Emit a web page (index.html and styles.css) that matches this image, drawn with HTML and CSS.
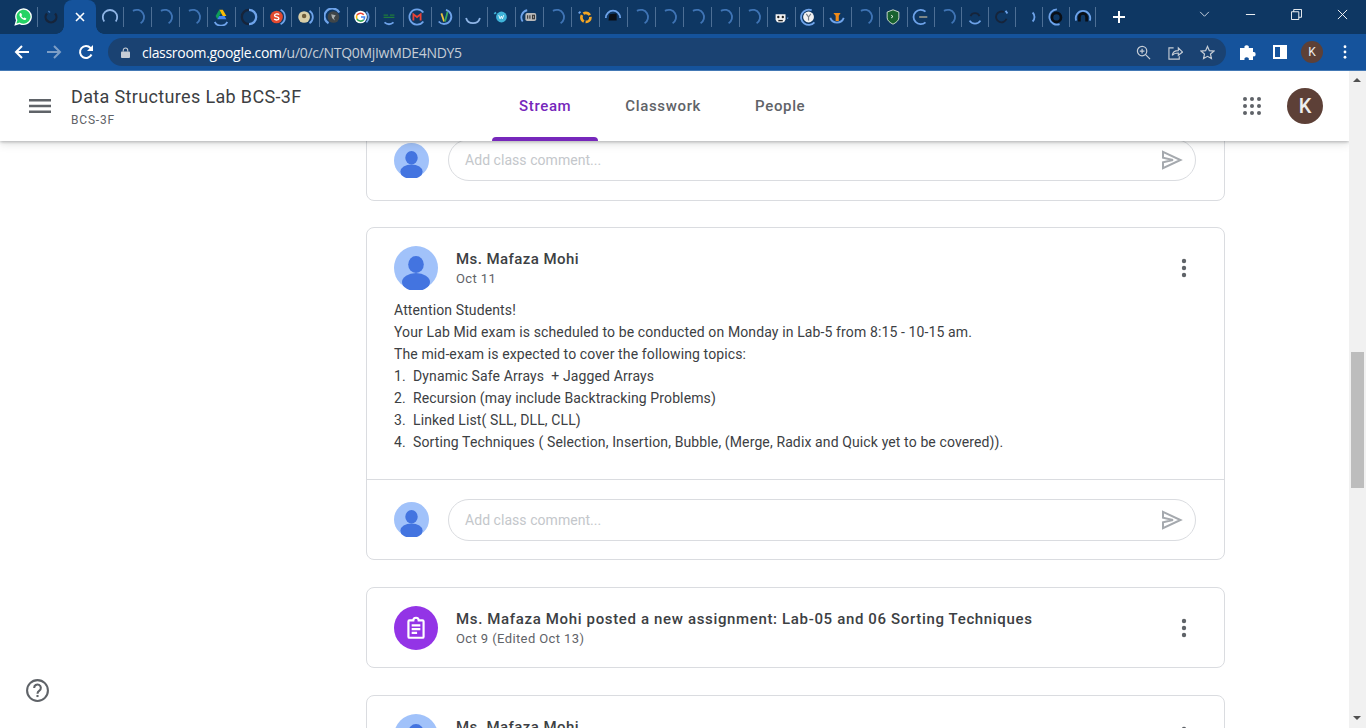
FILE: index.html
```html
<!DOCTYPE html>
<html lang="en">
<head>
  <meta charset="UTF-8">
  <title>Data Structures Lab BCS-3F</title>
  <link rel="stylesheet" href="styles.css">
</head>
<body>
  <svg class="defs" width="0" height="0">
    <symbol id="arc" viewBox="0 0 20 20"><path d="M5.5 3.2A8 8 0 0 1 14 17" fill="none" stroke="currentColor" stroke-width="2"/></symbol>
    <symbol id="ring" viewBox="0 0 20 20"><path d="M3.6 15A8 8 0 1 1 16.4 15" fill="none" stroke="currentColor" stroke-width="2"/></symbol>
    <symbol id="under" viewBox="0 0 20 20"><path d="M2.3 11a8 8 0 0 0 15.4 0" fill="none" stroke="currentColor" stroke-width="2"/></symbol>
    <symbol id="person" viewBox="0 0 44 44">
      <circle cx="22" cy="22" r="22" fill="#a1c2fa"/>
      <ellipse cx="22" cy="18.5" rx="7.8" ry="8.5" fill="#4374e0"/>
      <ellipse cx="22" cy="36" rx="14" ry="9" fill="#4374e0"/>
    </symbol>
    <symbol id="send" viewBox="0 0 24 24"><path d="M3 3.8 20.5 12 3 20.2V14.300l10-2.300-10-2.300z" fill="none" stroke="#a5a9ae" stroke-width="2"/></symbol>
    <symbol id="dots" viewBox="0 0 24 24"><circle cx="12" cy="5" r="2.200"/><circle cx="12" cy="12" r="2.200"/><circle cx="12" cy="19" r="2.200"/></symbol>
  </svg>

  <div class="tabstrip">
    <div class="tab">
      <svg class="fav" viewBox="0 0 20 20"><path d="M1.5 18.5 3 13.500A8.500 8.500 0 1 1 6.300 17z" fill="#25d366" stroke="#fff" stroke-width="1.500"/><path d="M7 5.500c-1.500 1-1.200 3 .5 5s4 3.500 5.500 2.500l.8-1.200-2.200-1.300-1 .8c-1-.5-2-1.500-2.400-2.500l.8-1-1.200-2.300z" fill="#fff"/></svg>
    </div>
    <div class="tab sep before-active"><svg class="fav" viewBox="0 0 20 20"><path d="M5.500 6A6 6 0 1 0 14.500 6" fill="none" stroke="#16243a" stroke-width="2.500"/><path d="M7 3.500l2 1.500" stroke="#3f74b5" stroke-width="1.500"/></svg></div>
    <div class="tab active">
      <svg class="close" viewBox="0 0 10 10"><path d="M1 1l8 8M9 1l-8 8" stroke="#fff" stroke-width="1.600"/></svg>
    </div>
    <div class="tab small"><svg class="fav lite"><use href="#ring"/></svg></div>
    <div class="tab sep"><svg class="fav dim"><use href="#arc"/></svg></div>
    <div class="tab sep"><svg class="fav dim"><use href="#arc"/></svg></div>
    <div class="tab sep"><svg class="fav dim"><use href="#arc"/></svg></div>
    <div class="tab sep">
      <svg class="fav" viewBox="0 0 20 20"><path d="M8 2h4l4 7H12z" fill="#fbbc04"/><path d="M8 2 4 9l2 3.500L10 5.500z" fill="#0f9d58"/><path d="M6 12.500h10l-2-3.500H8z" fill="#4285f4"/><path d="M3 15.500a8 8 0 0 0 14 0" fill="none" stroke="#6ea3ea" stroke-width="2"/></svg>
    </div>
    <div class="tab sep"><svg class="fav" viewBox="0 0 20 20"><path d="M10 2a8 8 0 0 1 0 16" fill="none" stroke="#6ea3ea" stroke-width="2.500"/><path d="M10 18A8 8 0 0 1 10 2" fill="none" stroke="#16243a" stroke-width="2.500"/></svg></div>
    <div class="tab sep"><svg class="fav" viewBox="0 0 20 20"><circle cx="9.500" cy="10" r="7" fill="#e2492f"/><path d="M12.300 7.300c-1-1.200-5-1-5 .9 0 2.500 4.800 1 4.800 3.500 0 2-3.700 2-5.300.6" fill="none" stroke="#fff" stroke-width="1.500"/><path d="M14 2a9 9 0 0 1 0 16" fill="none" stroke="#6ea3ea" stroke-width="2"/></svg></div>
    <div class="tab sep"><svg class="fav" viewBox="0 0 20 20"><circle cx="9" cy="10" r="6.500" fill="#d9cfa8"/><circle cx="9" cy="9" r="2.500" fill="#6f5d3a"/><path d="M15 3a8.500 8.500 0 0 1 0 14" fill="none" stroke="#6ea3ea" stroke-width="2"/></svg></div>
    <div class="tab sep"><svg class="fav" viewBox="0 0 20 20"><circle cx="10.500" cy="10" r="6.500" fill="#3f4548"/><path d="M8 7l5 1-2 3 1 3-3-3z" fill="#a9aeae"/><path d="M5 17A8.800 8.800 0 1 1 17 5" fill="none" stroke="#6ea3ea" stroke-width="2.500"/></svg></div>
    <div class="tab sep"><svg class="fav" viewBox="0 0 20 20"><circle cx="9.500" cy="10" r="7" fill="#fff"/><path d="M13 7.500A4.500 4.500 0 0 0 5.500 8" fill="none" stroke="#ea4335" stroke-width="1.700"/><path d="M5.500 8a4.500 4.500 0 0 0 0 4" fill="none" stroke="#fbbc04" stroke-width="1.700"/><path d="M5.500 12a4.500 4.500 0 0 0 7.500 1" fill="none" stroke="#34a853" stroke-width="1.700"/><path d="M13 13a4.500 4.500 0 0 0 1-3H10" fill="none" stroke="#4285f4" stroke-width="1.700"/><path d="M16 4a8.500 8.500 0 0 1 0 12" fill="none" stroke="#6ea3ea" stroke-width="2"/></svg></div>
    <div class="tab sep"><svg class="fav" viewBox="0 0 20 20"><path d="M4 8h5M11 8h5M4 10.500h12" stroke="#1f7a3d" stroke-width="1.300"/><path d="M5 16a8 8 0 0 0 10 0" fill="none" stroke="#6ea3ea" stroke-width="2"/></svg></div>
    <div class="tab sep"><svg class="fav" viewBox="0 0 20 20"><path d="M6 14V7l4 3 4-3v7" fill="none" stroke="#e94235" stroke-width="2"/><path d="M17 15A8.500 8.500 0 1 1 10 1.500a8.500 8.500 0 0 1 7 3.500" fill="none" stroke="#6ea3ea" stroke-width="2"/></svg></div>
    <div class="tab sep"><svg class="fav" viewBox="0 0 20 20"><path d="M6 6l3 9" stroke="#f0c33c" stroke-width="2"/><path d="M13 4l-3 11" stroke="#39a95c" stroke-width="2"/><path d="M11 2a8 8 0 1 1-8 13" fill="none" stroke="#6ea3ea" stroke-width="2"/></svg></div>
    <div class="tab sep"><svg class="fav lite"><use href="#under"/></svg></div>
    <div class="tab sep"><svg class="fav" viewBox="0 0 20 20"><circle cx="10.500" cy="10" r="6" fill="#3fb3d8"/><path d="M7.500 8l1.500 4 1.500-3 1 3 1.500-4" fill="none" stroke="#fff" stroke-width="1"/><path d="M2.500 6.500 4.500 5" stroke="#3fb3d8" stroke-width="2"/></svg></div>
    <div class="tab sep"><svg class="fav" viewBox="0 0 20 20"><rect x="6" y="5.500" width="12" height="9" rx="2" fill="#b9b9b9"/><path d="M8.500 8v4M11 8v4M14 8v4h2V8z" fill="none" stroke="#333" stroke-width="1.200"/><path d="M3 15A8 8 0 0 1 8 2.500" fill="none" stroke="#6ea3ea" stroke-width="2"/></svg></div>
    <div class="tab sep"><svg class="fav dim"><use href="#arc"/></svg></div>
    <div class="tab sep"><svg class="fav" viewBox="0 0 20 20"><circle cx="11" cy="10.500" r="5" fill="none" stroke="#f5a623" stroke-width="3" stroke-dasharray="8 2"/><path d="M3 6l2-2" stroke="#6ea3ea" stroke-width="2"/></svg></div>
    <div class="tab sep"><svg class="fav" viewBox="0 0 20 20"><path d="M6 7l8-1v8H5z" fill="#0a0f16"/><path d="M2 11A8 8 0 0 1 18 11" fill="none" stroke="#6ea3ea" stroke-width="2"/></svg></div>
    <div class="tab sep"><svg class="fav dim"><use href="#arc"/></svg></div>
    <div class="tab sep"><svg class="fav dim"><use href="#arc"/></svg></div>
    <div class="tab sep"><svg class="fav dim"><use href="#arc"/></svg></div>
    <div class="tab sep"><svg class="fav dim"><use href="#arc"/></svg></div>
    <div class="tab sep"><svg class="fav dim"><use href="#arc"/></svg></div>
    <div class="tab sep"><svg class="fav" viewBox="0 0 20 20"><path d="M4 7h11v6a4 4 0 0 1-4 3H8a4 4 0 0 1-4-3z" fill="#f2f2f2"/><circle cx="7" cy="10" r="1.300" fill="#222"/><circle cx="12" cy="10" r="1.300" fill="#222"/><path d="M7 14h5" stroke="#222" stroke-width="1.500"/><path d="M17 11l1 .5" stroke="#6ea3ea" stroke-width="1.500"/></svg></div>
    <div class="tab sep"><svg class="fav" viewBox="0 0 20 20"><circle cx="9.500" cy="10" r="6" fill="#f2f2f2"/><path d="M7 6.500l2.500 3.500L12 6.500M9.500 10v4" fill="none" stroke="#79808a" stroke-width="1.300"/><path d="M16 16A8.500 8.500 0 1 1 13 2.500" fill="none" stroke="#6ea3ea" stroke-width="2"/></svg></div>
    <div class="tab sep"><svg class="fav" viewBox="0 0 20 20"><path d="M6 5.500h8l-2 3v6H8.500v-6z" fill="#ef8a17"/><path d="M2.500 11a8 8 0 0 0 15 0" fill="none" stroke="#6ea3ea" stroke-width="2"/></svg></div>
    <div class="tab sep"><svg class="fav dim"><use href="#arc"/></svg></div>
    <div class="tab sep"><svg class="fav" viewBox="0 0 20 20"><path d="M10 2l6.500 2.500v6.500c0 3-3.500 5.500-6.500 7-3-1.500-6.500-4-6.500-7V4.500z" fill="#17612f" stroke="#d8e4d6"/><path d="M8 8l2 1.500L8 11" fill="none" stroke="#fff"/></svg></div>
    <div class="tab sep small"><svg class="fav" viewBox="0 0 20 20"><path d="M15 16A8 8 0 1 1 15 4" fill="none" stroke="#6ea3ea" stroke-width="2"/><rect x="8" y="9" width="9" height="2" fill="#8a8f8a"/></svg></div>
    <div class="tab sep small"><svg class="fav dim"><use href="#arc"/></svg></div>
    <div class="tab sep small"><svg class="fav" viewBox="0 0 20 20"><path d="M5 9a5.500 5.500 0 0 1 10 0" fill="none" stroke="#16243a" stroke-width="2"/><path d="M4 14a7 7 0 0 0 12 0" fill="none" stroke="#6ea3ea" stroke-width="2"/></svg></div>
    <div class="tab sep small"><svg class="fav" viewBox="0 0 20 20"><path d="M15 12A6 6 0 1 1 12 4.500" fill="none" stroke="#16243a" stroke-width="2"/><path d="M14 3l2 3" stroke="#6ea3ea" stroke-width="2"/></svg></div>
    <div class="tab sep small"><svg class="fav" viewBox="0 0 20 20"><path d="M14 5a7 7 0 0 1 0 10" fill="none" stroke="#6ea3ea" stroke-width="2"/></svg></div>
    <div class="tab sep small"><svg class="fav" viewBox="0 0 20 20"><circle cx="10.500" cy="10.500" r="5" fill="none" stroke="#0a0f16" stroke-width="3"/><path d="M14 18A8.500 8.500 0 1 1 11 1.500" fill="none" stroke="#6ea3ea" stroke-width="2"/></svg></div>
    <div class="tab sep small last"><svg class="fav" viewBox="0 0 20 20"><path d="M6 15v-5a4 4 0 0 1 8 0v5" fill="none" stroke="#0a0f16" stroke-width="3"/><path d="M2.500 14A8 8 0 1 1 17.500 14" fill="none" stroke="#6ea3ea" stroke-width="2"/></svg></div>
    <svg class="plus" viewBox="0 0 12 12"><path d="M6 0v12M0 6h12" stroke="#fff" stroke-width="2"/></svg>
    <div class="win-btns">
      <svg class="win chevron" viewBox="0 0 12 8"><path d="M1 1l5 5 5-5" fill="none" stroke="#dfe6ef" stroke-width="1"/></svg>
      <svg class="win minimize" viewBox="0 0 12 12"><path d="M1 6h10" stroke="#fff" stroke-width="1"/></svg>
      <svg class="win restore" viewBox="0 0 12 12"><path d="M.5 3h8v8.500h-8zM3 3V.5h8.500V9H8.500" fill="none" stroke="#fff" stroke-width="1"/></svg>
      <svg class="win closewin" viewBox="0 0 12 12"><path d="M1 1l10 10M11 1 1 11" stroke="#fff" stroke-width="1"/></svg>
    </div>
  </div>

  <div class="toolbar">
    <svg class="nav" viewBox="0 0 16 16"><path d="M15 8H2M8 2 2 8l6 6" fill="none" stroke="#fff" stroke-width="2"/></svg>
    <svg class="nav" viewBox="0 0 16 16"><path d="M1 8h13M8 2l6 6-6 6" fill="none" stroke="#7d9ec6" stroke-width="2"/></svg>
    <svg class="nav" viewBox="0 0 16 16"><path d="M13.500 10.500A6 6 0 1 1 12.500 4L14.500 6" fill="none" stroke="#fff" stroke-width="2"/><path d="M15 1v6H9z" fill="#fff"/></svg>
    <div class="omnibox">
      <svg class="lock" viewBox="0 0 10 12"><path d="M2.500 5V3.500a2.500 2.500 0 0 1 5 0V5" fill="none" stroke="#c6cdd6" stroke-width="1.200"/><rect y="5" width="10" height="7" rx="1" fill="#c6cdd6"/></svg>
      <span class="url"><b>classroom.google.com</b>/u/0/c/NTQ0MjIwMDE4NDY5</span>
      <svg class="omni-ic zoom-ic" viewBox="0 0 16 16"><circle cx="6.500" cy="6.500" r="5" fill="none" stroke="#c6cdd6" stroke-width="1.300"/><path d="M10 10l5 5M4 6.500h5M6.500 4v5" stroke="#c6cdd6" stroke-width="1.300"/></svg>
      <svg class="omni-ic share-ic" viewBox="0 0 16 16"><path d="M6 3H1v12h11v-3" fill="none" stroke="#c6cdd6" stroke-width="1.200"/><path d="M4.500 11C5 7.500 7.500 6 11 6V3l4.500 4.500L11 11V8.500c-2.500 0-5 .5-6.500 2.500z" fill="none" stroke="#c6cdd6" stroke-width="1.200"/></svg>
      <svg class="omni-ic star-ic" viewBox="0 0 16 16"><path d="M8 1.500l2 4.500 4.800.5-3.600 3.200 1 4.800L8 12.100l-4.200 2.400 1-4.800L1.200 6.500 6 6z" fill="none" stroke="#c6cdd6" stroke-width="1.300"/></svg>
    </div>
    <svg class="ext" viewBox="0 0 16 16"><path d="M0 4h4.500a2.200 2.200 0 1 1 4.300 0H13v4a2.200 2.200 0 1 1 0 4.300V16H8.800a2.200 2.200 0 1 0-4.300 0H0z" fill="#fff"/></svg>
    <div class="sidepanel"></div>
    <div class="tb-avatar">K</div>
    <svg class="tb-menu" viewBox="0 0 4 16" fill="#fff"><circle cx="2" cy="2" r="1.600"/><circle cx="2" cy="8" r="1.600"/><circle cx="2" cy="14" r="1.600"/></svg>
  </div>

  <div class="viewport">
    <div class="page">
      <header class="topbar">
        <svg class="burger" viewBox="0 0 22 14"><path d="M0 1.200h22M0 7h22M0 12.800h22" stroke="#5f6368" stroke-width="2.400"/></svg>
        <div class="class-title">
          <div class="class-name">Data Structures Lab BCS-3F</div>
          <div class="class-sub">BCS-3F</div>
        </div>
        <nav class="nav-tabs">
          <a class="nav-tab current">Stream</a>
          <a class="nav-tab">Classwork</a>
          <a class="nav-tab">People</a>
        </nav>
        <svg class="apps" viewBox="0 0 18 18" fill="#5f6368">
          <circle cx="2" cy="2" r="2"/><circle cx="9" cy="2" r="2"/><circle cx="16" cy="2" r="2"/>
          <circle cx="2" cy="9" r="2"/><circle cx="9" cy="9" r="2"/><circle cx="16" cy="9" r="2"/>
          <circle cx="2" cy="16" r="2"/><circle cx="9" cy="16" r="2"/><circle cx="16" cy="16" r="2"/>
        </svg>
        <div class="user-avatar">K</div>
      </header>

      <main class="stream">
        <section class="card card-cut">
          <div class="comment-row">
            <svg class="avatar-sm"><use href="#person"/></svg>
            <div class="comment-input">Add class comment...<svg class="send"><use href="#send"/></svg></div>
          </div>
        </section>

        <section class="card">
          <div class="post-head">
            <svg class="avatar"><use href="#person"/></svg>
            <div class="post-meta">
              <div class="post-author">Ms. Mafaza Mohi</div>
              <div class="post-date">Oct 11</div>
            </div>
            <svg class="more"><use href="#dots"/></svg>
          </div>
          <div class="post-body">
            <div>Attention Students!</div>
            <div>Your Lab Mid exam is scheduled to be conducted on Monday in Lab-5 from 8:15 - 10-15 am.</div>
            <div>The mid-exam is expected to cover the following topics:</div>
            <ol class="topics">
              <li>Dynamic Safe Arrays&nbsp; + Jagged Arrays</li>
              <li>Recursion (may include Backtracking Problems)</li>
              <li>Linked List( SLL, DLL, CLL)</li>
              <li>Sorting Techniques ( Selection, Insertion, Bubble, (Merge, Radix and Quick yet to be covered)).</li>
            </ol>
          </div>
          <div class="comment-row divided">
            <svg class="avatar-sm"><use href="#person"/></svg>
            <div class="comment-input">Add class comment...<svg class="send"><use href="#send"/></svg></div>
          </div>
        </section>

        <section class="card">
          <div class="post-head assignment">
            <div class="assign-icon">
              <svg viewBox="0 0 24 24"><path d="M6 5h3.500a2.500 2.500 0 0 1 5 0H18a1 1 0 0 1 1 1v14a1 1 0 0 1-1 1H6a1 1 0 0 1-1-1V6a1 1 0 0 1 1-1z" fill="none" stroke="#fff" stroke-width="2"/><path d="M8 9.500h8M8 13h8M8 16.500h5" stroke="#fff" stroke-width="2"/></svg>
            </div>
            <div class="post-meta">
              <div class="post-author wide">Ms. Mafaza Mohi posted a new assignment: Lab-05 and 06 Sorting Techniques</div>
              <div class="post-date">Oct 9 (Edited Oct 13)</div>
            </div>
            <svg class="more"><use href="#dots"/></svg>
          </div>
        </section>

        <section class="card">
          <div class="post-head">
            <svg class="avatar"><use href="#person"/></svg>
            <div class="post-meta">
              <div class="post-author">Ms. Mafaza Mohi</div>
              <div class="post-date"></div>
            </div>
            <svg class="more"><use href="#dots"/></svg>
          </div>
        </section>
      </main>

      <svg class="help" viewBox="0 0 24 24"><circle cx="12" cy="12" r="10" fill="none" stroke="#5f6368" stroke-width="2"/><path d="M8.800 9.500a3.200 3.200 0 1 1 5 2.600c-1.200.9-1.800 1.400-1.800 2.900" fill="none" stroke="#5f6368" stroke-width="2"/><rect x="11" y="16.300" width="2" height="2" fill="#5f6368"/></svg>
    </div>

    <div class="scrollbar">
      <div class="sb-up"></div>
      <div class="sb-thumb"></div>
      <div class="sb-down"></div>
    </div>
  </div>
</body>
</html>
```

FILE: styles.css
```css
* { box-sizing: border-box; }
html, body { height: 100%; }
body {
  margin: 0;
  overflow: hidden;
  font-family: Roboto, "Liberation Sans", sans-serif;
  color: #3c4043;
  background: #fff;
}
.defs { position: absolute; }

/* browser chrome */
.tabstrip {
  height: 34px;
  background: #0e3763;
  display: flex;
  align-items: center;
  padding-left: 9px;
}
.tab {
  width: 28px;
  height: 34px;
  flex: none;
  display: flex;
  align-items: center;
  justify-content: center;
  position: relative;
}
.tab.small { width: 27px; }
.tab.before-active { margin-right: -1px; }
.tab.sep::after {
  content: "";
  position: absolute;
  left: 0;
  top: 7px;
  height: 20px;
  width: 1px;
  background: #4d6f95;
}
.tab.last::before {
  content: "";
  position: absolute;
  right: 0;
  top: 7px;
  height: 20px;
  width: 1px;
  background: #4d6f95;
}
.tab.active {
  width: 32px;
  background: #15539c;
  border-radius: 8px 8px 0 0;
  z-index: 1;
}
.tab.active::before,
.tab.active::after {
  content: "";
  position: absolute;
  bottom: 0;
  width: 8px;
  height: 8px;
}
.tab.active::before {
  left: -8px;
  background: radial-gradient(circle at 0 0, transparent 7.5px, #15539c 8px);
}
.tab.active::after {
  right: -8px;
  background: radial-gradient(circle at 100% 0, transparent 7.5px, #15539c 8px);
}
.fav { width: 18px; height: 18px; }
.fav.lite { color: #8fb5e6; }
.fav.dim { color: #3f74b5; }
.close { width: 10px; height: 10px; }
.plus { width: 12px; height: 12px; margin-left: 17px; flex: none; }
.win-btns { margin-left: auto; display: flex; align-items: center; padding-right: 18px; }
.win { flex: none; width: 11px; height: 11px; margin: -6px 0 0 35px; }
.chevron { height: 7px; margin-left: 0; }

.toolbar {
  height: 37px;
  background: #15539c;
  display: flex;
  align-items: center;
  border-bottom: 1px solid #4479b5;
}
.nav { width: 16px; height: 16px; flex: none; margin-left: 16px; }
.nav:first-child { margin-left: 14px; }
.omnibox {
  width: 1118px;
  height: 28px;
  margin-left: 14px;
  padding: 0 11px 0 13px;
  background: #1a4272;
  border-radius: 14px;
  display: flex;
  align-items: center;
  flex: none;
}
.lock { width: 9px; height: 11px; flex: none; }
.url {
  margin-left: 12px;
  font-size: 14px;
  color: #c6cdd6;
  font-family: "Open Sans", sans-serif;
  letter-spacing: -.3px;
}
.url b { font-weight: 400; color: #fff; }
.omni-ic { width: 15px; height: 15px; flex: none; }
.zoom-ic { margin-left: auto; }
.share-ic { margin-left: 17px; }
.star-ic { margin-left: 17px; }
.ext { width: 16px; height: 16px; margin-left: 14px; flex: none; }
.sidepanel {
  width: 14px;
  height: 14px;
  margin-left: 17px;
  border: 2px solid #fff;
  border-right-width: 7px;
  flex: none;
}
.tb-avatar {
  width: 22px;
  height: 22px;
  margin-left: 14px;
  border-radius: 50%;
  background: #5d4037;
  color: #eee;
  font-size: 12px;
  text-align: center;
  line-height: 22px;
  flex: none;
}
.tb-menu { width: 4px; height: 14px; margin-left: 20px; flex: none; }

/* page */
.viewport { height: 657px; display: flex; }
.page { flex: 1; position: relative; overflow: hidden; }
.topbar {
  height: 70px;
  background: #fff;
  display: flex;
  align-items: center;
  position: relative;
  z-index: 2;
  box-shadow: 0 1px 3px rgba(60,64,67,.35), 0 4px 8px rgba(60,64,67,.12);
}
.burger { width: 22px; height: 14px; margin-left: 29px; flex: none; }
.class-title { margin-left: 20px; width: 421px; flex: none; }
.class-name { font-size: 18px; line-height: 24px; color: #3c4043; letter-spacing: .35px; margin-top: 2px; }
.class-sub { font-size: 12px; line-height: 18px; margin-top: 2px; color: #5f6368; letter-spacing: .8px; }
.nav-tabs { display: flex; height: 70px; }
.nav-tab {
  height: 70px;
  padding: 0 27px;
  font-size: 15px;
  font-weight: 500;
  line-height: 70px;
  color: #5f6368;
  letter-spacing: .65px;
  position: relative;
}
.nav-tab.current { color: #7627bb; }
.nav-tab.current::after {
  content: "";
  position: absolute;
  left: 0;
  right: 0;
  bottom: 0;
  height: 4px;
  background: #7627bb;
  border-radius: 4px 4px 0 0;
}
.apps { width: 18px; height: 18px; margin-left: auto; flex: none; }
.user-avatar {
  width: 36px;
  height: 36px;
  margin: 0 26px 0 26px;
  border-radius: 50%;
  background: #5d4037;
  color: #eee;
  font-size: 20px;
  font-weight: 500;
  text-align: center;
  line-height: 36px;
  flex: none;
}

.stream {
  width: 859px;
  margin: -1px 0 0 366px;
  display: flex;
  flex-direction: column;
  gap: 27px;
}
.card {
  background: #fff;
  border: 1px solid #dadce0;
  border-radius: 8px;
  flex: none;
}
.card-cut { margin: -21px 0 -1px; }
.comment-row {
  display: flex;
  align-items: center;
  padding: 19px 28px 18px 27px;
}
.card-cut .comment-row { padding-bottom: 19px; }
.card-cut .avatar-sm { margin-top: 1px; }
.comment-row.divided { border-top: 1px solid #dadce0; }
.avatar-sm { width: 35px; height: 35px; flex: none; margin-top: -1px; }
.comment-input {
  margin-left: 19px;
  flex: 1;
  height: 42px;
  border: 1px solid #dadce0;
  border-radius: 21px;
  display: flex;
  align-items: center;
  justify-content: space-between;
  padding: 0 11px 0 16px;
  font-size: 14px;
  color: #c4c7cb;
  letter-spacing: .05px;
}
.send { width: 24px; height: 24px; flex: none; }
.post-head { display: flex; align-items: center; padding: 18px 28px 0 27px; }
.avatar { width: 44px; height: 44px; flex: none; }
.post-meta { margin-left: 18px; flex: 1; padding-top: 2px; }
.post-author { font-size: 15px; line-height: 20px; font-weight: 500; letter-spacing: .43px; color: #3c4043; }
.post-author.wide { letter-spacing: .65px; }
.post-date { font-size: 13px; line-height: 20px; min-height: 20px; color: #5f6368; letter-spacing: .4px; }
.more { width: 24px; height: 24px; fill: #5f6368; flex: none; }
.post-body { padding: 9px 28px 26px 27px; font-size: 14px; line-height: 22px; letter-spacing: .12px; }
.topics { margin: 0; padding: 0; list-style: none; counter-reset: topic; }
.topics li { counter-increment: topic; }
.topics li::before { content: counter(topic) "."; display: inline-block; width: 19px; }
.assignment { padding: 18px 28px 17px 27px; }
.assign-icon {
  width: 44px;
  height: 44px;
  border-radius: 50%;
  background: #9334e6;
  display: flex;
  align-items: center;
  justify-content: center;
  flex: none;
}
.assign-icon svg { width: 26px; height: 26px; }
.help { position: absolute; left: 25px; bottom: 25px; width: 25px; height: 25px; }

/* scrollbar */
.scrollbar { width: 17px; flex: none; background: #f1f1f1; position: relative; }
.sb-up, .sb-down {
  position: absolute;
  left: 4px;
  width: 0;
  height: 0;
  border-left: 4px solid transparent;
  border-right: 4px solid transparent;
}
.sb-up { top: 7px; border-bottom: 4px solid #505050; }
.sb-down { bottom: 8px; border-top: 4px solid #505050; }
.sb-thumb { position: absolute; top: 281px; left: 2px; right: 2px; height: 136px; background: #bdbdbd; }
```
